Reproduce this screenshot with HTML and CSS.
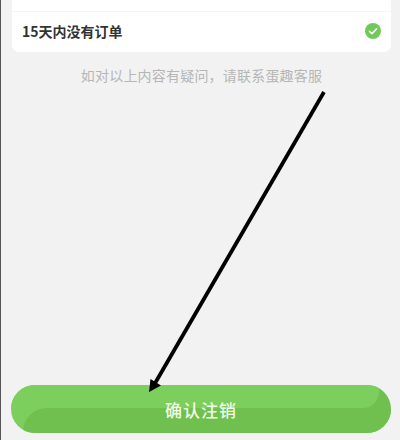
FILE: index.html
```html
<!DOCTYPE html>
<html lang="zh-CN">
<head>
  <meta charset="UTF-8">
  <title>确认注销</title>
  <link rel="stylesheet" href="styles.css">
</head>
<body>
  <div class="page">
    <div class="card">
      <div class="row">
        <span class="row-label">15天内没有订单</span>
        <span class="check">
          <svg viewBox="0 0 16 16" width="16" height="16">
            <path d="M4.4 8.3 L7 10.6 L11.6 5.9" fill="none" stroke="#f4fbf0" stroke-width="1.6" stroke-linecap="round" stroke-linejoin="round"/>
          </svg>
        </span>
      </div>
    </div>
    <p class="hint">如对以上内容有疑问，请联系蛋趣客服</p>
    <button class="confirm"><span class="confirm-text">确认注销</span></button>

    <!-- arrow drawn over the page -->
    <svg class="arrow" viewBox="0 0 400 440" width="400" height="440">
      <line x1="324" y1="92" x2="154" y2="385" stroke="#000" stroke-width="3.8"/>
      <path d="M149 392 L150.5 379 L161 385.5 Z" fill="#000"/>
    </svg>
  </div>
</body>
</html>
```

FILE: styles.css
```css
/* General Styles */
body {
  margin: 0;
  font-family: "Noto Sans CJK SC", "Liberation Sans", sans-serif;
  background: #f2f2f2;
}

.page {
  height: 440px;
  box-sizing: border-box;
  padding: 0 9px 7px 11px;
  border-left: 1px solid #555;
  display: flex;
  flex-direction: column;
  overflow: hidden;
}

/* Card */
.card {
  height: 52px;
  background: #fff;
  border-radius: 0 0 7px 7px;
  box-sizing: border-box;
  padding-top: 11px;
}

.row {
  height: 39px;
  border-top: 1px solid #f5f5f5;
  box-sizing: border-box;
  display: flex;
  align-items: center;
  justify-content: space-between;
  padding: 0 10px;
}

.row-label {
  font-size: 14px;
  font-weight: 700;
  color: #333;
}

.check {
  width: 16px;
  height: 16px;
  border-radius: 50%;
  background: #72c95a;
  display: flex;
}

/* Hint */
.hint {
  margin: 13px 0 0;
  text-align: center;
  font-size: 14px;
  letter-spacing: 0.2px;
  line-height: 20px;
  color: #b6b6b6;
}

/* Confirm button */
.confirm {
  position: relative;
  margin: auto 0 0 -1px;
  height: 48px;
  border: none;
  border-radius: 24px;
  background: linear-gradient(to right, #7ccf5c 50%, #6fc04f 50%);
  color: #f2fbe9;
  font-family: inherit;
  font-size: 17px;
  font-weight: 500;
  letter-spacing: 1px;
  padding: 0;
  overflow: hidden;
}

.confirm::before {
  content: "";
  position: absolute;
  left: 0;
  right: 12px;
  top: 0;
  height: 23px;
  border-radius: 0 0 16px 0;
  background: #7ccf5c;
}

.confirm::after {
  content: "";
  position: absolute;
  left: 12px;
  right: 0;
  top: 23px;
  height: 48px;
  border-radius: 24px 0 0 24px;
  background: #6fc04f;
}

.confirm-text {
  position: relative;
  z-index: 1;
}

.arrow {
  position: absolute;
  left: 0;
  top: 0;
  pointer-events: none;
}
```
